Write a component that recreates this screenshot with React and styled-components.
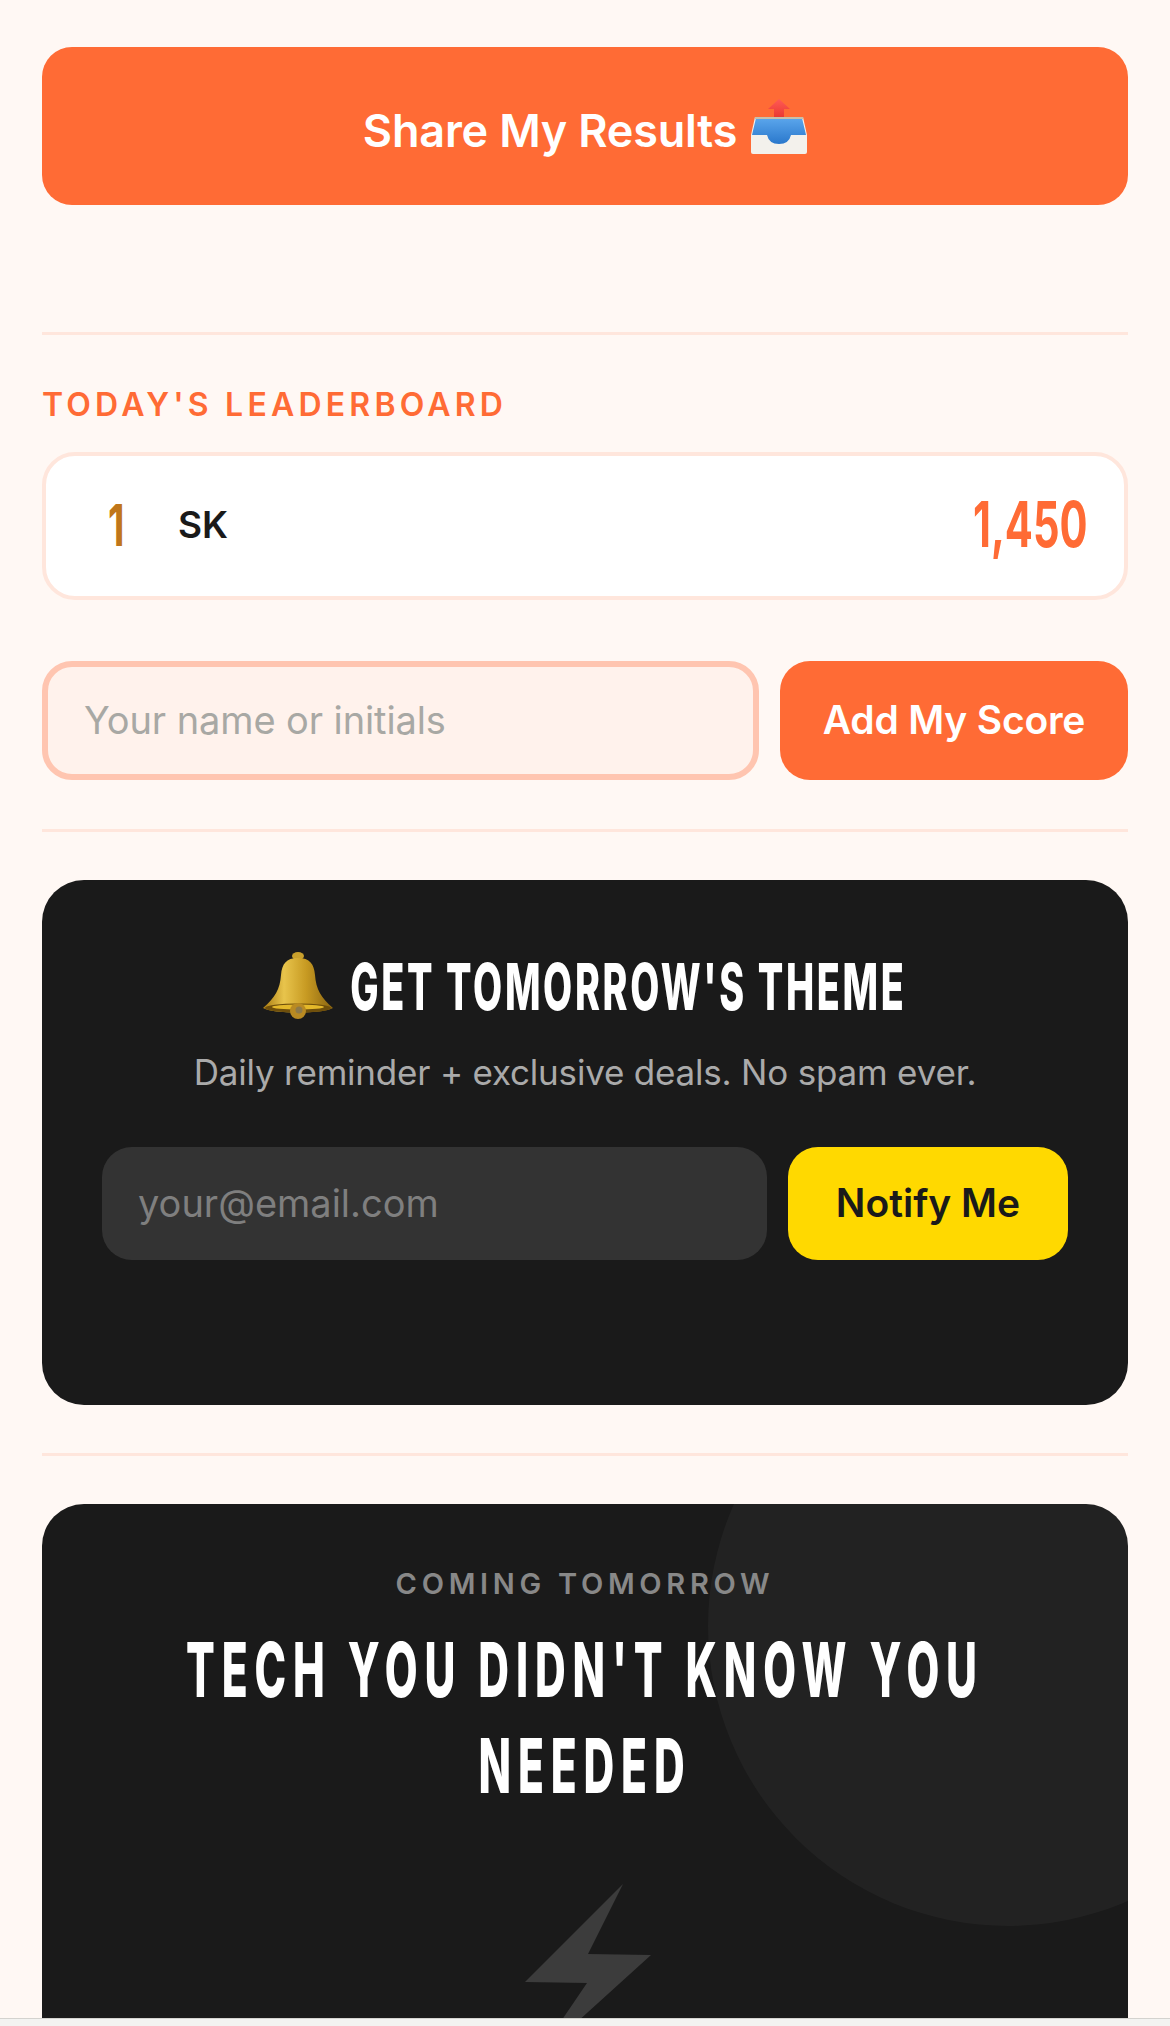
import React from "react";
import styled, { createGlobalStyle } from "styled-components";

const Global = createGlobalStyle`
  html, body { margin: 0; padding: 0; background: #fff8f4; }
  * { box-sizing: border-box; }
`;
const body = `"Inter", "Liberation Sans", sans-serif`;

const Page = styled.div`
  position: relative;
  height: 2026px;
  overflow: hidden;
  padding: 47px 42px 0;
  background: #fff8f4;
  font-family: ${body};
`;
const Fit = styled.span`
  display: flex;
  flex: none;
  justify-content: ${(p) => p.$justify || "center"};
  width: ${(p) => p.$width}px;
  margin-bottom: ${(p) => p.$lift || 0}px;
`;
const Squeezed = styled.span`
  flex: none;
  white-space: nowrap;
  transform: scaleX(${(p) => p.$x});
  transform-origin: ${(p) => p.$origin || "center"};
`;
const ShareButton = styled.button`
  display: flex;
  align-items: center;
  justify-content: center;
  gap: 14px;
  width: 100%;
  height: 158px;
  border: 0;
  border-radius: 30px;
  background: #ff6b35;
  color: #fff;
  font: 600 45px ${body};
  letter-spacing: -0.2px;
`;
const ShareLabel = styled.span`
  padding-top: 8px;
`;
const Divider = styled.hr`
  height: 3px;
  margin: ${(p) => p.$top}px 0 0;
  border: 0;
  background: #ffe6dc;
`;
const Label = styled.div`
  margin-top: 48px;
  height: 44px;
  line-height: 44px;
  color: #ff6b35;
  font-size: 32px;
  font-weight: 600;
  letter-spacing: 4.2px;
`;
const ScoreCard = styled.div`
  display: flex;
  align-items: center;
  height: 148px;
  margin-top: 25px;
  padding: 0 36px 0 62px;
  border: 4px solid #ffe6dc;
  border-radius: 33px;
  background: #fff;
`;
const Rank = styled(Squeezed)`
  color: #c0761a;
  font-size: 58px;
  font-weight: 700;
`;
const Name = styled.span`
  flex: 1;
  margin: 0 0 4px 24px;
  color: #1a1a1a;
  font-size: 37px;
  font-weight: 600;
`;
const Score = styled(Squeezed)`
  color: #ff6b35;
  font-size: 63px;
  font-weight: 700;
`;
const ScoreForm = styled.div`
  display: flex;
  gap: 21px;
  height: 119px;
  margin-top: 61px;
`;
const NameInput = styled.input`
  flex: 1;
  min-width: 0;
  padding: 0 36px 2px;
  border: 6px solid #ffc5b0;
  border-radius: 30px;
  background: #fff2ec;
  font: 400 38px ${body};
  letter-spacing: -0.1px;
  outline: none;
  &::placeholder { color: #a8a8a4; opacity: 1; }
`;
const AddButton = styled.button`
  flex: none;
  width: 348px;
  padding: 0 0 2px;
  border: 0;
  border-radius: 30px;
  background: #ff6b35;
  color: #fff;
  font: 600 39px ${body};
  letter-spacing: -0.2px;
`;
const DarkCard = styled.section`
  position: relative;
  overflow: hidden;
  margin-top: 48px;
  border-radius: 42px;
  background: #1a1a1a;
  color: #fff;
  text-align: center;
`;
const NotifyCard = styled(DarkCard)`
  padding: 70px 60px 145px;
`;
const NotifyTitle = styled.h2`
  display: flex;
  align-items: center;
  justify-content: center;
  gap: 18px;
  height: 72px;
  margin: 0;
  padding-right: 3px;
  font-size: 65px;
  font-weight: 800;
  letter-spacing: 4.6px;
`;
const NotifyText = styled.p`
  height: 48px;
  margin: 26px 0 0;
  color: #aaaaaa;
  font-size: 35px;
  line-height: 48px;
  letter-spacing: -0.2px;
`;
const NotifyForm = styled.div`
  display: flex;
  gap: 21px;
  height: 113px;
  margin-top: 51px;
`;
const EmailInput = styled.input`
  flex: 1;
  min-width: 0;
  padding: 0 36px 2px;
  border: 0;
  border-radius: 30px;
  background: #333333;
  font: 400 38px ${body};
  outline: none;
  &::placeholder { color: #7f7f7f; opacity: 1; }
`;
const NotifyButton = styled.button`
  flex: none;
  width: 280px;
  padding: 0 0 2px;
  border: 0;
  border-radius: 30px;
  background: #ffd900;
  color: #1a1a1a;
  font: 600 39px ${body};
`;
const TomorrowCard = styled(DarkCard)`
  height: 700px;
  padding-top: 60px;
`;
const Circle = styled.div`
  position: absolute;
  top: -178px;
  right: -180px;
  width: 600px;
  height: 600px;
  border-radius: 50%;
  background: rgba(255, 255, 255, 0.035);
`;
const Eyebrow = styled.div`
  position: relative;
  height: 40px;
  color: #888888;
  font-size: 29px;
  font-weight: 600;
  line-height: 40px;
  letter-spacing: 4.7px;
`;
const ThemeRow = styled.div`
  position: relative;
  display: flex;
  justify-content: center;
  margin-top: 17px;
`;
const Theme = styled.h2`
  flex: none;
  width: 1480px;
  margin: 0;
  font-size: 76px;
  font-weight: 800;
  line-height: 96px;
  letter-spacing: 12.2px;
  transform: scaleX(0.56);
`;
const Bolt = styled.svg`
  display: block;
  width: 132px;
  height: 180px;
  margin: 71px auto 0;
`;
const BrowserBar = styled.div`
  position: absolute;
  left: 0;
  right: 0;
  bottom: 0;
  height: 8px;
  border-top: 1px solid #d4d3cf;
  background: #f3f3f1;
`;

const InboxIcon = () => (
  <svg width="56" height="55" viewBox="0 0 56 55" aria-hidden="true">
    <defs>
      <linearGradient id="tray" x1="0" y1="0" x2="0" y2="1">
        <stop offset="0" stopColor="#5ba6ec" />
        <stop offset="1" stopColor="#2a78cc" />
      </linearGradient>
      <linearGradient id="up" x1="0" y1="0" x2="0" y2="1">
        <stop offset="0" stopColor="#ff5a55" />
        <stop offset="1" stopColor="#e8362e" />
      </linearGradient>
    </defs>
    <path d="M28 0 39 10H33V20H23V10H17Z" fill="url(#up)" />
    <path d="M4 18H52L56 36V53Q56 55 54 55H2Q0 55 0 53V36Z" fill="#f3f1ec" />
    <path d="M5 19H51L55 36H40Q38 45 28 45 18 45 16 36H1Z" fill="url(#tray)" />
    <path d="M4 18H52L52.3 20H3.7Z" fill="#c9bfa9" />
  </svg>
);
const BellIcon = () => (
  <svg width="72" height="70" viewBox="0 0 72 70" aria-hidden="true">
    <defs>
      <linearGradient id="gold" x1="0" y1="0" x2="1" y2="0">
        <stop offset="0" stopColor="#a87a10" />
        <stop offset="0.3" stopColor="#e8c44c" />
        <stop offset="0.62" stopColor="#c79a22" />
        <stop offset="1" stopColor="#8a6410" />
      </linearGradient>
    </defs>
    <ellipse cx="36" cy="5" rx="6" ry="4" fill="#c9a02c" />
    <path d="M36 7C24 7 20 13 19 24 18 38 13 47 1 57 10 63 62 63 71 57 59 47 54 38 53 24 52 13 48 7 36 7Z" fill="url(#gold)" />
    <ellipse cx="36" cy="57" rx="33" ry="4.5" fill="#6f4f0b" />
    <ellipse cx="36" cy="56" rx="26" ry="2.5" fill="#e4b82a" />
    <circle cx="36" cy="60" r="8" fill="#b98a22" />
    <circle cx="37" cy="59" r="3.5" fill="#8f7a48" />
  </svg>
);

export default function App() {
  return (
    <Page>
      <Global />
      <ShareButton>
        <ShareLabel>Share My Results</ShareLabel>
        <InboxIcon />
      </ShareButton>
      <Divider $top={127} />
      <Label>TODAY'S LEADERBOARD</Label>
      <ScoreCard>
        <Fit $width={46} $justify="flex-start" $lift={3}>
          <Rank $x={0.66} $origin="left">1</Rank>
        </Fit>
        <Name>SK</Name>
        <Fit $width={114} $justify="flex-end" $lift={5}>
          <Score $x={0.66} $origin="right">1,450</Score>
        </Fit>
      </ScoreCard>
      <ScoreForm>
        <NameInput placeholder="Your name or initials" />
        <AddButton>Add My Score</AddButton>
      </ScoreForm>
      <Divider $top={49} />
      <NotifyCard>
        <NotifyTitle>
          <BellIcon />
          <Fit $width={553}>
            <Squeezed $x={0.58}>GET TOMORROW'S THEME</Squeezed>
          </Fit>
        </NotifyTitle>
        <NotifyText>Daily reminder + exclusive deals. No spam ever.</NotifyText>
        <NotifyForm>
          <EmailInput placeholder="your@email.com" />
          <NotifyButton>Notify Me</NotifyButton>
        </NotifyForm>
      </NotifyCard>
      <Divider $top={48} />
      <TomorrowCard>
        <Circle />
        <Eyebrow>COMING TOMORROW</Eyebrow>
        <ThemeRow>
          <Theme>TECH YOU DIDN'T KNOW YOU NEEDED</Theme>
        </ThemeRow>
        <Bolt viewBox="0 0 132 180" aria-hidden="true">
          <path d="M104 0 6 98 68 99 15 177 132 71 69 70Z" fill="#3c3c3c" />
        </Bolt>
      </TomorrowCard>
      <BrowserBar />
    </Page>
  );
}
